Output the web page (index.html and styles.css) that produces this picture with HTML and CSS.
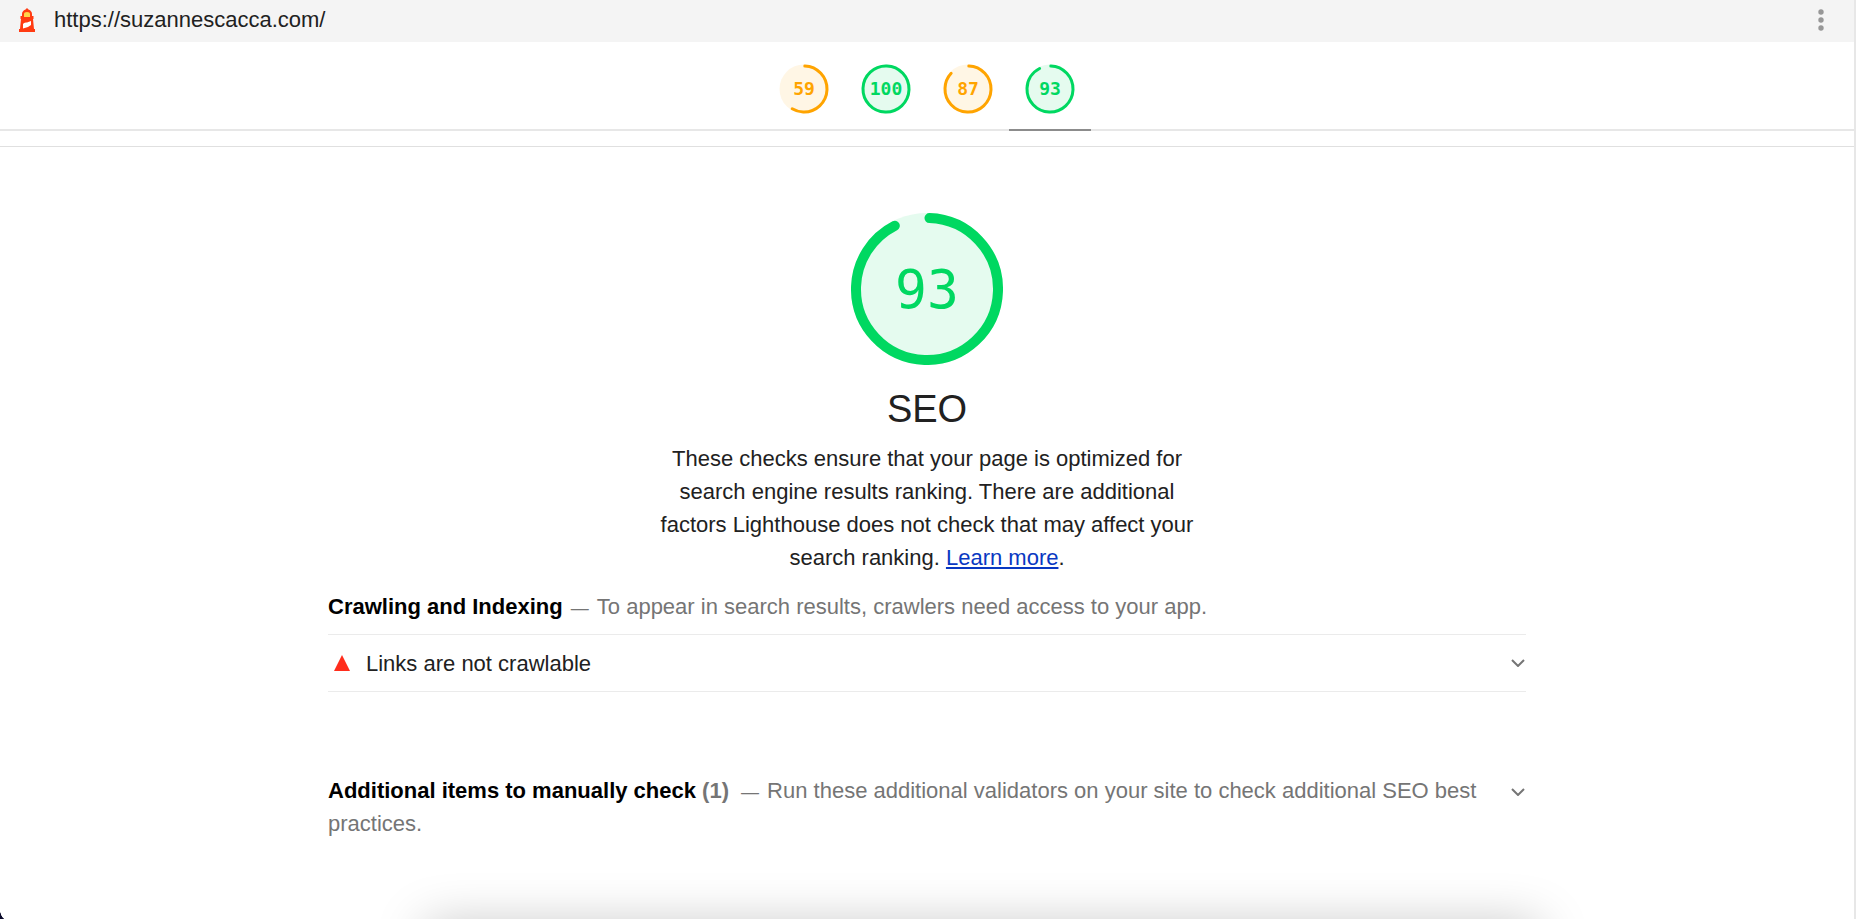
FILE: index.html
```
<!DOCTYPE html>
<html lang="en">
  <head>
    <meta charset="UTF-8" />
    <title>Lighthouse Report</title>
    <link rel="stylesheet" href="styles.css">
  </head>
  <body>
    <div class="report">
      <div class="topbar">
        <svg class="topbar-logo" viewBox="0 0 16 24">
          <path d="M8 0l1.500 1.500Q13 3 13 6v2h1.500v3H14l1 10h1v3H0v-3h1l1-10h-.5V8H3V6q0-3 3.500-4.500z" fill="#ff3b12" />
          <path d="M5 9V6q0-2 3-2t3 2v3z" fill="#ffd54a" />
          <path d="M4 16q1-2 4-1.500L12 13v4l-3 2-5 1.500z" fill="#fff" />
        </svg>
        <a class="topbar-url" href="https://suzannescacca.com/">https://suzannescacca.com/</a>
        <button class="topbar-menu" type="button" aria-label="Tools menu">
          <svg viewBox="0 0 6 22">
            <circle cx="3" cy="3" r="2.700" />
            <circle cx="3" cy="11" r="2.700" />
            <circle cx="3" cy="19" r="2.700" />
          </svg>
        </button>
      </div>

      <nav class="scores">
        <a class="score average" href="#performance">
          <svg viewBox="0 0 50 50">
            <circle class="gauge-base" cx="25" cy="25" r="24.500" />
            <circle class="gauge-arc" cx="25" cy="25" r="23" pathLength="360" stroke-dasharray="209 360" />
          </svg>
          <span>59</span>
        </a>
        <a class="score pass" href="#accessibility">
          <svg viewBox="0 0 50 50">
            <circle class="gauge-base" cx="25" cy="25" r="24.500" />
            <circle class="gauge-arc" cx="25" cy="25" r="23" />
          </svg>
          <span>100</span>
        </a>
        <a class="score average" href="#best-practices">
          <svg viewBox="0 0 50 50">
            <circle class="gauge-base" cx="25" cy="25" r="24.500" />
            <circle class="gauge-arc" cx="25" cy="25" r="23" pathLength="360" stroke-dasharray="311 360" />
          </svg>
          <span>87</span>
        </a>
        <a class="score pass active" href="#seo">
          <svg viewBox="0 0 50 50">
            <circle class="gauge-base" cx="25" cy="25" r="24.500" />
            <circle class="gauge-arc" cx="25" cy="25" r="23" pathLength="360" stroke-dasharray="331 360" />
          </svg>
          <span>93</span>
        </a>
      </nav>

      <main class="category" id="seo">
        <header class="category-header">
          <div class="gauge pass">
            <svg viewBox="0 0 152 152">
              <circle class="gauge-base" cx="76" cy="76" r="76" />
              <circle class="gauge-arc" cx="76" cy="76" r="71" pathLength="360" stroke-dasharray="331 360" />
            </svg>
            <span>93</span>
          </div>
          <h1>SEO</h1>
          <p>
            These checks ensure that your page is optimized for search engine
            results ranking. There are additional factors Lighthouse does not
            check that may affect your search ranking.
            <a href="#learn-more">Learn more</a>.
          </p>
        </header>

        <section class="audit-group">
          <div class="group-header">
            <h2>Crawling and Indexing</h2>
            <span class="group-description">To appear in search results, crawlers need access to your app.</span>
          </div>
          <button class="audit" type="button">
            <svg class="fail-icon" viewBox="0 0 16 16"><path d="M8 0l8 16H0z" /></svg>
            <span>Links are not crawlable</span>
            <svg class="chevron" viewBox="0 0 14 8"><path d="M1 1l6 6 6-6" /></svg>
          </button>
        </section>

        <section class="clump">
          <div class="clump-text">
            <h2>Additional items to manually check <span class="count">(1)</span></h2>
            <span class="group-description">Run these additional validators on your site to check additional SEO best practices.</span>
          </div>
          <button class="clump-toggle" type="button" aria-label="Show manual checks">
            <svg class="chevron" viewBox="0 0 14 8"><path d="M1 1l6 6 6-6" /></svg>
          </button>
        </section>
      </main>

      <div class="dock-shadow"></div>
      <div class="corner"></div>
    </div>
  </body>
</html>
```
FILE: styles.css
```
* {
  box-sizing: border-box;
}

body {
  margin: 0;
  background: #fff;
  color: #212121;
  font-family: "Liberation Sans", Arial, sans-serif;
  font-size: 22px;
  line-height: 33px;
}

button {
  padding: 0;
  border: none;
  background: none;
  color: inherit;
  font: inherit;
  cursor: pointer;
}

svg {
  display: block;
}

h1,
h2,
p {
  margin: 0;
}

.report {
  position: relative;
  min-height: 100vh;
  overflow: hidden;
  border-right: 2px solid #e7e7e7;
}

/* top bar */
.topbar {
  display: flex;
  align-items: center;
  height: 42px;
  padding: 0 30px 2px 19px;
  background: #f4f4f4;
}

.topbar-logo {
  width: 16px;
  height: 24px;
  margin-right: 19px;
}

.topbar-url {
  padding-bottom: 2px;
  color: #212121;
  text-decoration: none;
}

.topbar-menu {
  margin-left: auto;
}

.topbar-menu svg {
  width: 6px;
  height: 22px;
  fill: #979797;
}

/* gauges */
.gauge-base {
  fill: currentColor;
  opacity: 0.1;
}

.gauge-arc {
  fill: none;
  stroke: currentColor;
  stroke-width: 3px;
  stroke-linecap: round;
  transform: rotate(-88deg);
  transform-origin: center;
}

.pass {
  color: #00d861;
}

.average {
  color: #ffa400;
}

.scores {
  display: flex;
  justify-content: center;
  height: 89px;
  border-bottom: 2px solid #e7e7e7;
}

.score {
  display: grid;
  place-items: center;
  width: 82px;
  height: 89px;
  border-bottom: 2px solid transparent;
  padding-top: 6px;
  font: bold 18px "DejaVu Sans Mono", monospace;
  text-decoration: none;
}

.score svg {
  width: 50px;
  height: 50px;
}

.score svg,
.score span,
.gauge svg,
.gauge span {
  grid-area: 1 / 1;
}

.score.active {
  border-bottom-color: #8c8c8c;
}

/* category */
.category {
  margin-top: 15px;
  padding: 66px 24px 0;
  border-top: 1px solid #e0e0e0;
}

.category-header {
  display: flex;
  flex-direction: column;
  align-items: center;
  text-align: center;
}

.gauge {
  display: grid;
  place-items: center;
  width: 152px;
  height: 152px;
  font: 53px "DejaVu Sans Mono", monospace;
}

.gauge svg {
  width: 152px;
  height: 152px;
}

.gauge .gauge-arc {
  stroke-width: 10px;
}

.category-header h1 {
  margin-top: 20px;
  font-size: 38px;
  font-weight: normal;
  line-height: 48px;
}

.category-header p {
  max-width: 546px;
  margin-top: 9px;
}

.category-header a {
  color: #0938c2;
}

.audit-group,
.clump {
  max-width: 1198px;
  margin: 0 auto;
}

.group-header {
  padding: 16px 0 11px;
}

h2 {
  display: inline;
  font-size: 22px;
  color: #000;
}

.group-description {
  color: #757575;
}

.group-description::before {
  content: "—";
  margin: 0 8px 0 2px;
  font-size: 18px;
  line-height: 1;
}

.audit {
  display: flex;
  align-items: center;
  width: 100%;
  height: 58px;
  border-top: 1px solid #ebebeb;
  border-bottom: 1px solid #ebebeb;
  padding: 0 1px 0 6px;
  text-align: left;
}

.fail-icon {
  width: 16px;
  height: 16px;
  margin-right: 16px;
  fill: #ff2d1c;
}

.chevron {
  width: 14px;
  height: 8px;
  margin-left: auto;
  fill: none;
  stroke: #757575;
  stroke-width: 2px;
}

.clump {
  display: flex;
  align-items: flex-start;
  justify-content: space-between;
  margin-top: 82px;
}

.clump-text {
  max-width: 1160px;
}

.count {
  margin-right: 4px;
  color: #757575;
}

.clump-toggle {
  padding: 14px 1px;
}

/* shadow of the window below and the rounded window corner */
.dock-shadow {
  position: absolute;
  right: 17%;
  bottom: -40px;
  left: 23%;
  height: 40px;
  box-shadow: 0 6px 50px rgba(0, 0, 0, 0.25);
}

.corner {
  position: absolute;
  bottom: 0;
  left: 0;
  width: 6px;
  height: 11px;
  background: radial-gradient(ellipse at top right, transparent 70%, #0b0b2b 75%);
}
```
